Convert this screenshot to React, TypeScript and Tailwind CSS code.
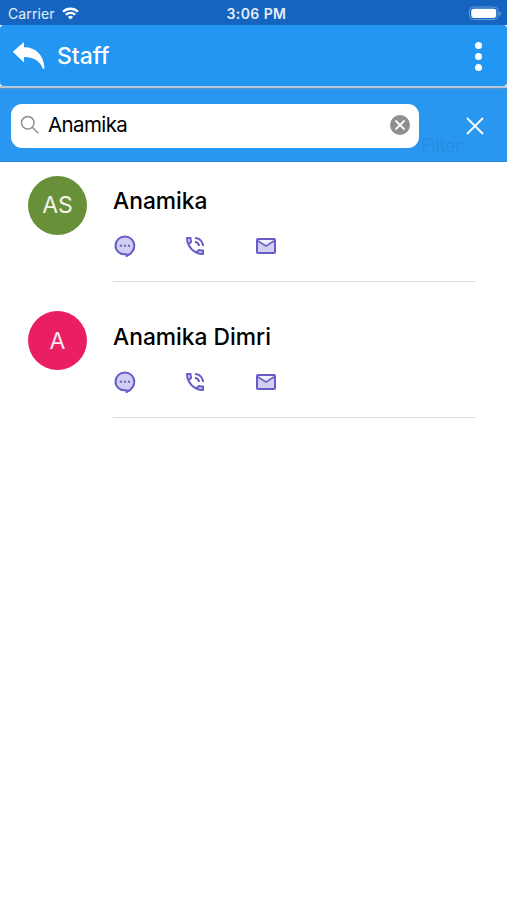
import React from 'react';

interface StaffMember {
  name: string;
  initials: string;
  color: string;
}

const staff: StaffMember[] = [
  { name: 'Anamika', initials: 'AS', color: 'bg-[#689038]' },
  { name: 'Anamika Dimri', initials: 'A', color: 'bg-[#e91e63]' },
];

function StatusBar() {
  return (
    <div className="h-[25px] bg-[#1565c0] grid grid-cols-3 items-center pl-2 pr-[5px] pt-[2px] text-[#e3edf8]">
      <div className="flex items-center gap-[7px]">
        <span className="text-[14px] leading-none w-[47px] whitespace-nowrap tracking-[0.1px]">Carrier</span>
        <svg className="w-[17px] h-[13px]" viewBox="0 0 17 13" fill="none" stroke="white" strokeWidth="2.3">
          <path d="M1 4.8a10.7 10.7 0 0 1 15 0" />
          <path d="M3.8 7.8a6.7 6.7 0 0 1 9.4 0" />
          <path d="M8.5 12.6 5.9 10a3.7 3.7 0 0 1 5.2 0z" fill="white" stroke="none" />
        </svg>
      </div>
      <div className="pt-px pl-[3px] text-[14px] leading-none font-semibold text-center whitespace-nowrap tracking-[0.4px]">3:06 PM</div>
      <svg className="w-[34px] h-[15px] justify-self-end" viewBox="0 0 34 15">
        <rect x="1.5" y="1" width="28.5" height="12.5" rx="4" fill="none" stroke="#6a9dd9" />
        <rect x="3.2" y="2.7" width="25" height="9.2" rx="2.4" fill="white" />
        <path d="M31.5 5.2c1.5.7 1.5 4 0 4.7z" fill="#8db4e1" />
      </svg>
    </div>
  );
}

function Header() {
  return (
    <div className="bg-white">
      <header className="h-[61px] bg-[#2196f3] rounded-[4px] flex items-center pl-3 pr-[25px] pt-px">
        <svg className="w-[34px] h-[30px]" viewBox="0 0 34 30" fill="white">
          <path d="M.8 10.8 12 1v5.2C23.5 6 32.3 14 32.5 27.8h-1.6C28 20 22 16.2 12 16v5.6z" />
        </svg>
        <h1 className="ml-[11px] pt-px text-[23px] leading-none font-medium text-white">Staff</h1>
        <div className="ml-auto flex flex-col gap-[4px]">
          <span className="size-[7px] rounded-full bg-white" />
          <span className="size-[7px] rounded-full bg-white" />
          <span className="size-[7px] rounded-full bg-white" />
        </div>
      </header>
      <div className="h-px bg-[#b5cde3]" />
      <div className="h-px bg-[#b8c3cf]" />
      <div className="h-px bg-[#5492c9]" />
    </div>
  );
}

function SearchBar() {
  return (
    <div className="relative h-[73px] bg-[#2997ef] border-b border-[#2583d2] flex items-center pl-[11px] pr-[23px] pt-px">
      {/* toolbar label that shows faintly through the search bar */}
      <span className="absolute left-[421px] top-[48px] text-[18px] leading-none tracking-[-0.3px] text-[#258de3]">Filter</span>
      <div className="relative w-[408px] h-[44px] bg-white rounded-[11px] flex items-center pl-[9px] pr-[9px] pb-px">
        <svg className="size-[20px]" viewBox="0 0 20 20" fill="none" stroke="#8e8e93" strokeWidth="1.5">
          <circle cx="7.8" cy="7.8" r="6.3" />
          <path d="m12.5 12.5 5.3 5.3" strokeLinecap="round" />
        </svg>
        <span className="ml-2 pt-px text-[20.5px] leading-none tracking-[-0.6px] text-black">Anamika</span>
        <svg className="ml-auto size-[20px]" viewBox="0 0 20 20">
          <circle cx="10" cy="10" r="10" fill="#8e8e93" />
          <path d="m6 6 8 8m0-8-8 8" stroke="white" strokeWidth="1.8" strokeLinecap="round" />
        </svg>
      </div>
      <svg className="ml-auto size-[18px]" viewBox="0 0 18 18" stroke="white" strokeWidth="1.8">
        <path d="m1 1 16 16M17 1 1 17" />
      </svg>
    </div>
  );
}

function ContactActions() {
  return (
    <div className="flex items-center mt-[21px]">
      <svg className="size-6" viewBox="0 0 24 24">
        <path d="M13.6 20.2C6.3 21.2 2.5 16.4 2.5 11.4A9.4 8.9 0 0 1 21.3 11.4c0 4.4-2.9 8.3-7.7 10.7z" fill="#d0cef3" stroke="#675cc8" strokeWidth="2" strokeLinejoin="round" />
        <path d="M6.8 10.8h2v2h-2zm4.1 0h2v2h-2zm4.1 0h2v2h-2z" fill="#675cc8" />
      </svg>
      <svg className="size-6 ml-[45.5px]" viewBox="0 0 24 24" fill="#675cc8">
        <path d="M5.03 5c.09 1.32.32 2.59.68 3.8l1.2-1.2c-.41-1.2-.67-1.85-.76-2.6zM15.2 18.31c1.2.4 2.48.62 3.8.7v-1.5c-.88-.07-1.75-.22-2.6-.45z" fill="#d0cef3" />
        <path d="M12 3v2c3.87 0 7 3.13 7 7h2c0-4.97-4.03-9-9-9zm3 9h2c0-2.76-2.24-5-5-5v2c1.66 0 3 1.34 3 3z" />
        <path d="M20 15.5c-1.25 0-2.45-.2-3.57-.57-.1-.03-.21-.05-.31-.05-.26 0-.51.1-.71.29l-2.2 2.2a15.05 15.05 0 0 1-6.59-6.59l2.2-2.2c.28-.28.36-.67.25-1.02A11.36 11.36 0 0 1 8.5 4c0-.55-.45-1-1-1H4c-.55 0-1 .45-1 1 0 9.39 7.61 17 17 17 .55 0 1-.45 1-1v-3.5c0-.55-.45-1-1-1zM5.03 5h1.5c.07.88.22 1.75.46 2.59L5.79 8.8A15.1 15.1 0 0 1 5.03 5zM19 18.97a15.1 15.1 0 0 1-3.8-.75l1.2-1.2c.85.24 1.71.39 2.6.45z" />
      </svg>
      <svg className="size-6 ml-[47px]" viewBox="0 0 24 24">
        <path d="M4 8v10h16V8l-8 5z" fill="#d0cef3" />
        <path d="M4 6h16l-8 5z" fill="#f0effb" />
        <path d="M22 6c0-1.1-.9-2-2-2H4c-1.1 0-2 .9-2 2v12c0 1.1.9 2 2 2h16c1.1 0 2-.9 2-2zm-2 0-8 5-8-5zm0 12H4V8l8 5 8-5z" fill="#675cc8" />
      </svg>
    </div>
  );
}

function StaffRow({ member }: { member: StaffMember }) {
  return (
    <li className="flex h-[135.5px]">
      <div className={`size-[59px] mt-[13.5px] pt-px rounded-full flex items-center justify-center text-[23px] leading-none text-white/90 ${member.color}`}>
        {member.initials}
      </div>
      <div className="ml-[26px] flex-1 h-[120px] pt-[27px] border-b border-[#dedede]">
        <h2 className="text-[22.8px] leading-[24px] font-medium text-black">{member.name}</h2>
        <ContactActions />
      </div>
    </li>
  );
}

function App() {
  return (
    <div className="w-full h-[900px] overflow-hidden bg-white font-['Inter','Liberation_Sans',sans-serif]">
      <StatusBar />
      <Header />
      <SearchBar />
      <ul className="pl-7 pr-[31px]">
        {staff.map((member) => (
          <StaffRow key={member.name} member={member} />
        ))}
      </ul>
    </div>
  );
}

export default App;
